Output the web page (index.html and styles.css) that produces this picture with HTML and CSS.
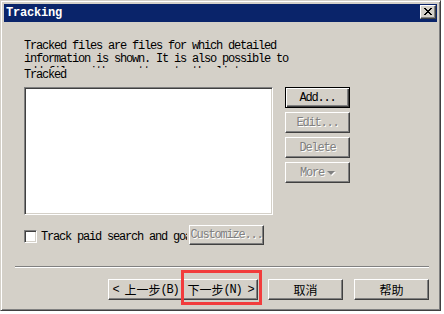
FILE: index.html
```html
<!DOCTYPE html>
<html>
<head>
<meta charset="utf-8">
<link rel="stylesheet" href="styles.css">
</head>
<body>
<div class="window">
  <div class="titlebar">
    <span class="title">Tracking</span>
    <button class="close" aria-label="Close">
      <svg width="8" height="7" viewBox="0 0 8 7" shape-rendering="crispEdges">
        <path d="M0 0h2v1h-2zM6 0h2v1h-2zM1 1h2v1h-2zM5 1h2v1h-2zM2 2h4v1h-4zM3 3h2v1h-2zM2 4h4v1h-4zM1 5h2v1h-2zM5 5h2v1h-2zM0 6h2v1h-2zM6 6h2v1h-2z" fill="#000"/>
      </svg>
    </button>
  </div>
  <div class="body">
    <div class="main">
      <p class="desc">Tracked files are files for which detailed information is shown. It is also possible to add files with a pattern to the list.</p>
      <div class="label">Tracked</div>
      <div class="row">
        <div class="list"></div>
        <div class="btncol">
          <button class="btn default">Add...</button>
          <button class="btn disabled">Edit...</button>
          <button class="btn disabled">Delete</button>
          <button class="btn disabled">More<span class="tri"></span></button>
        </div>
      </div>
      <div class="checkrow">
        <span class="checkbox"></span>
        <span class="checklabel">Track paid search and goal conversions</span>
        <button class="btn disabled custom">Customize...</button>
      </div>
    </div>
    <div class="sep"></div>
    <div class="footer">
      <button class="btn wide">&lt;&nbsp;<span class="cjk">上一步</span>(B)</button>
      <span class="next-wrap">
        <button class="btn wide"><span class="cjk">下一步</span>(N)&nbsp;&gt;</button>
        <span class="highlight"></span>
      </span>
      <button class="btn wide gap10"><span class="cjk">取消</span></button>
      <button class="btn wide gap11"><span class="cjk">帮助</span></button>
    </div>
  </div>
</div>
</body>
</html>
```
FILE: styles.css
```css
* { box-sizing: border-box; }
body {
  margin: 0;
  background: #ffffff;
  font-family: "Liberation Mono", "Noto Sans CJK SC", monospace;
  font-size: 12px;
  letter-spacing: -1.2px;
  color: #000;
}
.window {
  width: 441px;
  height: 311px;
  background: #d4d0c8;
  border: 1px solid;
  border-color: #d4d0c8 #404040 #404040 #d4d0c8;
  box-shadow: inset 1px 1px #ffffff, inset -1px -1px #808080;
  padding: 3px;
  display: flex;
  flex-direction: column;
}
.titlebar {
  height: 18px;
  background: #0a246a;
  display: flex;
  align-items: center;
  justify-content: space-between;
  padding: 0 1px 0 2px;
}
.title {
  color: #fff;
  font-weight: bold;
  letter-spacing: -0.2px;
  line-height: 18px;
}
.close {
  width: 16px;
  height: 14px;
  padding: 0;
  margin-top: -2px;
  background: #d4d0c8;
  border: 1px solid;
  border-color: #ffffff #404040 #404040 #ffffff;
  box-shadow: inset -1px -1px #808080;
  display: flex;
  align-items: center;
  justify-content: center;
}
.close svg { display: block; margin: 0 1px 1px 0; }
.body { display: flex; flex-direction: column; }
.main { padding: 18px 0 0 20px; }
.desc {
  margin: 0;
  width: 282px;
  height: 28px;
  line-height: 13px;
  overflow: hidden;
}
.label { line-height: 13px; height: 13px; margin: 1px 0 5px; }
.row { display: flex; gap: 12px; }
.list {
  width: 249px;
  height: 128px;
  background: #fff;
  border: 1px solid;
  border-color: #808080 #ffffff #ffffff #808080;
  box-shadow: inset 1px 1px #404040, inset -1px -1px #d4d0c8;
}
.btncol { display: flex; flex-direction: column; gap: 4px; }
.btn {
  width: 65px;
  height: 21px;
  padding: 0;
  margin: 0;
  font: inherit;
  letter-spacing: inherit;
  color: #000;
  background: #d4d0c8;
  border: 1px solid;
  border-color: #ffffff #404040 #404040 #ffffff;
  box-shadow: inset -1px -1px #808080;
  display: flex;
  align-items: center;
  justify-content: center;
  white-space: nowrap;
  overflow: hidden;
}
.btn.default {
  border-color: #000;
  box-shadow: inset 1px 1px #ffffff, inset -1px -1px #404040, inset -2px -2px #808080;
}
.btn.disabled { color: #808080; text-shadow: 1px 1px #ffffff; }
.tri {
  width: 0;
  height: 0;
  margin-left: 3px;
  border-left: 4px solid transparent;
  border-right: 4px solid transparent;
  border-top: 4px solid #808080;
  filter: drop-shadow(1px 1px 0 #ffffff);
}
.checkrow { display: flex; align-items: center; margin-top: 10px; height: 20px; }
.checkbox {
  width: 13px;
  height: 13px;
  margin-top: 3px;
  background: #fff;
  border: 1px solid;
  border-color: #808080 #ffffff #ffffff #808080;
  box-shadow: inset 1px 1px #404040, inset -1px -1px #d4d0c8;
}
.checklabel {
  width: 146px;
  margin-left: 4px;
  overflow: hidden;
  white-space: nowrap;
  margin-top: 3px;
}
.btn.custom { width: 75px; height: 20px; margin-left: 2px; }
.sep {
  margin: 21px 8px 0 11px;
  height: 2px;
  border-top: 1px solid #808080;
  border-bottom: 1px solid #ffffff;
}
.footer { display: flex; justify-content: flex-end; margin: 11px 8px 0 0; }
.btn.wide { width: 75px; }
.gap10 { margin-left: 10px; }
.gap11 { margin-left: 11px; }
.cjk { letter-spacing: 0; }
.next-wrap { position: relative; display: flex; }
.highlight {
  position: absolute;
  left: -2px;
  top: -9px;
  width: 81px;
  height: 35px;
  border: 3px solid #f23c3c;
  pointer-events: none;
}
```
